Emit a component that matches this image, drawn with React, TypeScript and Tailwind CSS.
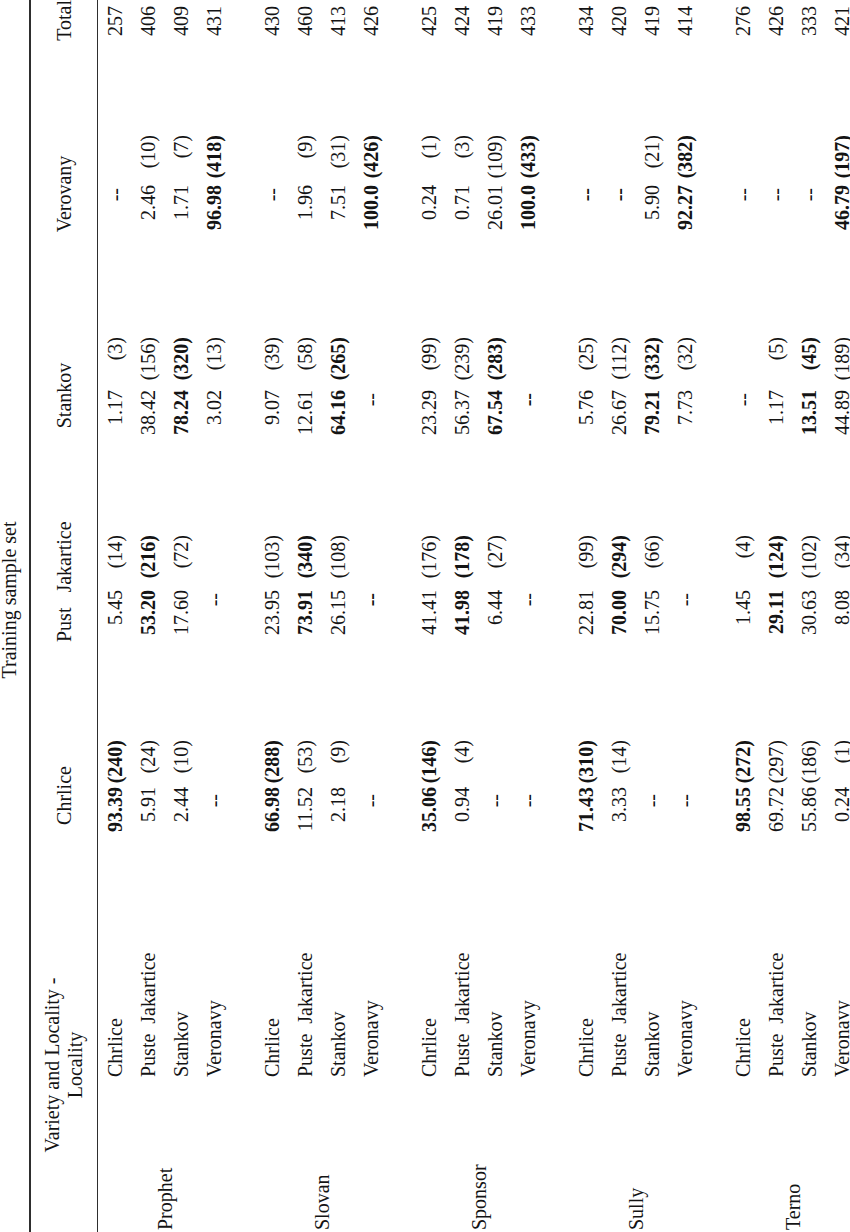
import React from 'react';

type C = [string, string?, number?];
type Row = [string, C[], string];
type Group = { name: string; rows: Row[] };

const groups: Group[] = [
  {
    name: 'Prophet',
    rows: [
      ['Chrlice', [['93.39', '240', 1], ['5.45', '14'], ['1.17', '3'], ['--']], '257'],
      ['Puste  Jakartice', [['5.91', '24'], ['53.20', '216', 1], ['38.42', '156'], ['2.46', '10']], '406'],
      ['Stankov', [['2.44', '10'], ['17.60', '72'], ['78.24', '320', 1], ['1.71', '7']], '409'],
      ['Veronavy', [['--'], ['--'], ['3.02', '13'], ['96.98', '418', 1]], '431'],
    ],
  },
  {
    name: 'Slovan',
    rows: [
      ['Chrlice', [['66.98', '288', 1], ['23.95', '103'], ['9.07', '39'], ['--']], '430'],
      ['Puste  Jakartice', [['11.52', '53'], ['73.91', '340', 1], ['12.61', '58'], ['1.96', '9']], '460'],
      ['Stankov', [['2.18', '9'], ['26.15', '108'], ['64.16', '265', 1], ['7.51', '31']], '413'],
      ['Veronavy', [['--'], ['--', '', 1], ['--'], ['100.0', '426', 1]], '426'],
    ],
  },
  {
    name: 'Sponsor',
    rows: [
      ['Chrlice', [['35.06', '146', 1], ['41.41', '176'], ['23.29', '99'], ['0.24', '1']], '425'],
      ['Puste  Jakartice', [['0.94', '4'], ['41.98', '178', 1], ['56.37', '239'], ['0.71', '3']], '424'],
      ['Stankov', [['--'], ['6.44', '27'], ['67.54', '283', 1], ['26.01', '109']], '419'],
      ['Veronavy', [['--'], ['--'], ['--', '', 1], ['100.0', '433', 1]], '433'],
    ],
  },
  {
    name: 'Sully',
    rows: [
      ['Chrlice', [['71.43', '310', 1], ['22.81', '99'], ['5.76', '25'], ['--', '', 1]], '434'],
      ['Puste  Jakartice', [['3.33', '14'], ['70.00', '294', 1], ['26.67', '112'], ['--', '', 1]], '420'],
      ['Stankov', [['--'], ['15.75', '66'], ['79.21', '332', 1], ['5.90', '21']], '419'],
      ['Veronavy', [['--'], ['--'], ['7.73', '32'], ['92.27', '382', 1]], '414'],
    ],
  },
  {
    name: 'Terno',
    rows: [
      ['Chrlice', [['98.55', '272', 1], ['1.45', '4'], ['--'], ['--']], '276'],
      ['Puste  Jakartice', [['69.72', '297'], ['29.11', '124', 1], ['1.17', '5'], ['--']], '426'],
      ['Stankov', [['55.86', '186'], ['30.63', '102'], ['13.51', '45', 1], ['--']], '333'],
      ['Veronavy', [['0.24', '1'], ['8.08', '34'], ['44.89', '189'], ['46.79', '197', 1]], '421'],
    ],
  },
];

const colCls = ['w-[197px]', 'w-[200px]', 'w-[205px]', 'w-[198px]'];
const boxCls = ['w-[99px]', 'w-[107px]', 'w-[105px]', 'w-[102px]'];
const cntCls = ['w-[47px]', 'w-[55px]', 'w-[53px]', 'w-[50px]'];
const dashCls = ['pr-[7px]', 'pr-[3px]', 'pr-[3px]', 'pr-[3px]'];

function DataCell({ c, i }: { c: C; i: number }) {
  const [v, n, b] = c;
  const bold = b ? 'font-bold' : '';
  const isDash = v === '--';
  return (
    <div className={colCls[i]}>
      <div className={`flex ${boxCls[i]}`}>
        <span className={`w-[52px] shrink-0 text-right ${bold} ${isDash ? dashCls[i] : ''}`}>{v}</span>
        <span className={`${cntCls[i]} shrink-0 text-right ${bold}`}>{n ? `(${n})` : ''}</span>
      </div>
    </div>
  );
}

export default function App() {
  return (
    <div className="relative h-[1232px] w-[850px] overflow-hidden bg-white">
      <div className="h-[850px] w-[1232px] origin-top-left [transform:translateY(1232px)_rotate(-90deg)] whitespace-pre font-['Liberation_Serif','Times_New_Roman',serif] text-[20px] text-[#141414]">
        <div className="flex h-[29px] items-start justify-center pl-[32px]">
          <span className="leading-[18px]">Training sample set</span>
        </div>
        <div className="h-[1.5px] bg-[#2e2e2e]" />
        <div className="flex h-[66px] items-center">
          <div className="w-[393px] pr-[59px] text-center leading-[23px]">
            <div>Variety and Locality -</div>
            <div>Locality</div>
          </div>
          <div className="w-[197px]">
            <div className="w-[99px] pr-[12px] text-center">Chrlice</div>
          </div>
          <div className="w-[200px]">
            <div className="w-[107px] pr-[30px] text-center">Pust   Jakartice</div>
          </div>
          <div className="w-[205px]">
            <div className="w-[105px] pr-[12px] text-center">Stankov</div>
          </div>
          <div className="w-[195px]">
            <div className="w-[102px] pr-[16px] text-center">Verovany</div>
          </div>
          <div className="w-[42px] text-right">Total</div>
        </div>
        <div className="h-[1.5px] bg-[#2e2e2e]" />
        <div className="flex flex-col gap-[24px]">
          {groups.map((g) => (
            <div key={g.name} className="flex">
              <div className="flex w-[150px] items-center pl-[2px]">{g.name}</div>
              <div className="flex flex-col">
                {g.rows.map((r, ri) => (
                  <div key={ri} className="flex h-[33.25px] items-center">
                    <div className="w-[243px] pl-[5px]">{r[0]}</div>
                    {r[1].map((c, ci) => (
                      <DataCell key={ci} c={c} i={ci} />
                    ))}
                    <div className="w-[39px] pl-[3px]">{r[2]}</div>
                  </div>
                ))}
              </div>
            </div>
          ))}
        </div>
      </div>
    </div>
  );
}
